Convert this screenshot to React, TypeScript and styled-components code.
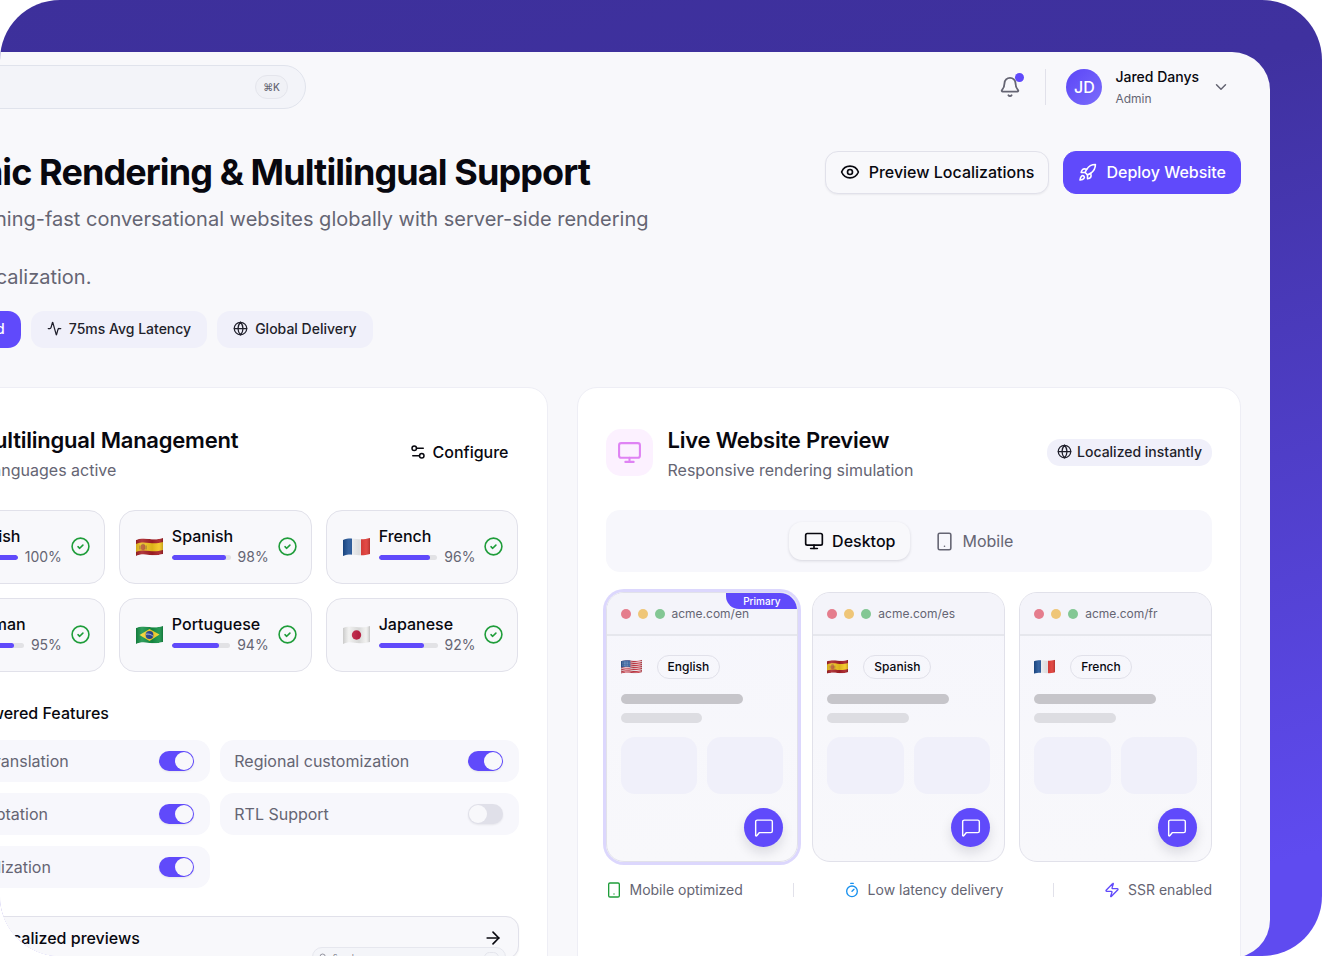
import React from "react";
import styled, { createGlobalStyle, css } from "styled-components";
import {
  Activity,
  ArrowRight,
  Bell,
  ChevronDown,
  Eye,
  Globe,
  Languages,
  Monitor,
  Rocket,
  Search,
  Server,
  Settings2,
  Sparkles,
  Timer,
  Zap,
} from "lucide-react";

const color = {
  ink: "#08080f",
  body: "#1f1f2b",
  muted: "#656573",
  accent: "#604afb",
  page: "#f8f8fb",
  soft: "#f0f0fa",
  line: "#e1e1ea",
};

const GlobalStyle = createGlobalStyle`
  *, *::before, *::after { box-sizing: border-box; }
  body { margin: 0; background: #fff; font-family: Inter, "Liberation Sans", sans-serif; color: ${color.ink}; }
  h1, h2, h3, p, ul { margin: 0; padding: 0; }
  ul { list-style: none; }
  button, input { font: inherit; color: inherit; }
  button { cursor: pointer; }
  svg { flex: none; display: block; }
`;

const Frame = styled.div`
  position: relative;
  display: flex;
  height: 100vh;
  padding: 52px 52px 0 0;
  overflow: hidden;
  border-radius: 60px;
  background: linear-gradient(165deg, #3d309b 0%, #3f319f 30%, #5f4bf0 92%);
`;

const AppPanel = styled.div`
  flex: 1;
  min-width: 0;
  margin: 0 0 -2px -146px;
  overflow: hidden;
  border-radius: 0 38px 38px 0;
  background: ${color.page};
`;

const TopBar = styled.header`
  display: flex;
  align-items: center;
  justify-content: space-between;
  height: 70px;
  padding: 0 40px 0 29px;
`;

const SearchBox = styled.label`
  display: flex;
  align-items: center;
  gap: 10px;
  width: 423px;
  height: 44px;
  padding: 0 17px;
  border: 1px solid #e0e3ec;
  border-radius: 22px;
  background: #f3f4f9;
  color: ${color.muted};

  input {
    flex: 1;
    min-width: 0;
    border: 0;
    outline: 0;
    background: none;
    font-size: 14px;
  }
`;

const Kbd = styled.kbd`
  padding: 0 7px;
  border: 1px solid #e4e5ec;
  border-radius: 12px;
  background: #f0f1f6;
  color: ${color.muted};
  font: 500 10px/22px Inter, "DejaVu Sans", sans-serif;
`;

const UserArea = styled.div`
  display: flex;
  align-items: center;
`;

const BellButton = styled.button`
  position: relative;
  display: flex;
  padding: 0;
  border: 0;
  background: none;
  color: ${color.muted};

  &::after {
    content: "";
    position: absolute;
    top: -3px;
    right: -3px;
    width: 9px;
    height: 9px;
    border-radius: 50%;
    background: ${color.accent};
  }
`;

const UserMenu = styled.button`
  display: flex;
  align-items: center;
  gap: 13px;
  height: 36px;
  margin-left: 24px;
  padding: 0 0 0 20px;
  border: 0;
  border-left: 1px solid ${color.line};
  background: none;
  text-align: left;

  > svg {
    color: ${color.muted};
  }
`;

const Avatar = styled.span`
  display: grid;
  place-items: center;
  width: 36px;
  height: 36px;
  border-radius: 50%;
  background: linear-gradient(135deg, #5b46f7, #7b6cfb);
  color: #fff;
  font-size: 16px;
  font-weight: 500;
`;

const UserText = styled.span`
  padding-top: 2px;
`;

const UserName = styled.span`
  display: block;
  font-size: 14px;
  font-weight: 500;
  line-height: 22px;
`;

const UserRole = styled.span`
  display: block;
  color: ${color.muted};
  font-size: 12px;
  line-height: 22px;
`;

const Main = styled.main`
  padding: 29px;
`;

const Hero = styled.section`
  display: flex;
  align-items: flex-start;
  justify-content: space-between;
`;

const Title = styled.h1`
  font-size: 36px;
  font-weight: 700;
  line-height: 43px;
  letter-spacing: -0.025em;
  white-space: nowrap;
`;

const Lead = styled.div`
  display: grid;
  gap: 29px;
  margin-top: 11px;
  color: ${color.muted};
  font-size: 20px;
  line-height: 29px;
  white-space: nowrap;
`;

const HeroActions = styled.div`
  display: flex;
  gap: 14px;
`;

const ActionButton = styled.button<{ $primary?: boolean }>`
  display: flex;
  align-items: center;
  gap: 9px;
  height: 43px;
  padding: 0 14px 1px;
  border: 1px solid ${(p) => (p.$primary ? color.accent : color.line)};
  border-radius: 13px;
  background: ${(p) => (p.$primary ? color.accent : color.page)};
  color: ${(p) => (p.$primary ? "#fff" : color.ink)};
  box-shadow: ${(p) => (p.$primary ? "none" : "0 1px 2px rgba(20, 20, 40, 0.06)")};
  font-size: 16px;
  font-weight: 500;
  white-space: nowrap;
`;

const Pills = styled.ul`
  display: flex;
  gap: 10px;
  margin: 19px 0 39px;
`;

const Pill = styled.li<{ $solid?: boolean; $small?: boolean }>`
  display: flex;
  align-items: center;
  gap: ${(p) => (p.$small ? 5 : 7)}px;
  height: ${(p) => (p.$small ? 27 : 37)}px;
  padding: 0 ${(p) => (p.$small ? 10 : 16)}px 2px;
  border-radius: 13px;
  background: ${(p) => (p.$solid ? color.accent : color.soft)};
  color: ${(p) => (p.$solid ? "#fff" : color.body)};
  font-size: 14px;
  font-weight: 500;
  white-space: nowrap;
`;

const Columns = styled.div`
  display: grid;
  grid-template-columns: repeat(2, minmax(0, 1fr));
  gap: 29px;
`;

const Card = styled.section`
  min-height: 640px;
  padding: 41px 28px 28px;
  border: 1px solid #eeeef5;
  border-radius: 20px;
  background: #fff;
`;

const CardHeader = styled.header`
  display: flex;
  align-items: center;
  gap: 15px;
  margin-bottom: 34px;
`;

const IconTile = styled.div<{ $bg: string; $fg: string }>`
  display: grid;
  place-items: center;
  width: 47px;
  height: 47px;
  border-radius: 15px;
  background: ${(p) => p.$bg};
  color: ${(p) => p.$fg};
`;

const Heading = styled.div`
  flex: 1;
  height: 47px;
  padding-top: 4px;
  display: flex;
  flex-direction: column;
  justify-content: center;
  white-space: nowrap;
`;

const CardTitle = styled.h2`
  font-size: 22px;
  font-weight: 600;
  line-height: 31px;
  letter-spacing: -0.01em;
`;

const CardSub = styled.p`
  color: ${color.muted};
  font-size: 16px;
  line-height: 29px;
`;

const GhostButton = styled.button`
  display: flex;
  align-items: center;
  gap: 6px;
  padding: 0 10px 2px;
  border: 0;
  background: none;
  font-size: 16px;
  font-weight: 500;
`;

const LanguageGrid = styled.ul`
  display: grid;
  grid-template-columns: repeat(3, minmax(0, 1fr));
  gap: 14px;
`;

const LanguageCard = styled.li`
  display: flex;
  align-items: center;
  gap: 9px;
  height: 74px;
  padding: 0 14px 1px 16px;
  border: 1px solid ${color.line};
  border-radius: 16px;
  background: ${color.page};
`;

const LanguageInfo = styled.div`
  flex: 1;
  min-width: 0;
`;

const LanguageName = styled.div`
  font-size: 16px;
  font-weight: 500;
  line-height: 21px;
`;

const ProgressRow = styled.div`
  display: flex;
  align-items: center;
  gap: 7px;
  color: ${color.muted};
  font-size: 14px;
  line-height: 20px;
`;

const Track = styled.div`
  flex: 1;
  height: 5px;
  overflow: hidden;
  border-radius: 3px;
  background: #e2e2e5;
`;

const Fill = styled.div`
  height: 100%;
  border-radius: 3px;
  background: ${color.accent};
`;

const SectionTitle = styled.h3`
  display: flex;
  align-items: center;
  gap: 16px;
  margin: 28px 0 14px;
  font-size: 16px;
  font-weight: 500;
  line-height: 26px;
`;

const FeatureGrid = styled.div`
  display: grid;
  grid-template-columns: repeat(2, minmax(0, 1fr));
  gap: 11px 10px;
`;

const Feature = styled.label`
  display: flex;
  align-items: center;
  justify-content: space-between;
  height: 42px;
  padding: 0 16px 0 14px;
  border-radius: 14px;
  background: #f7f7fc;
  color: ${color.muted};
  font-size: 16px;
  white-space: nowrap;
`;

const Switch = styled.input`
  appearance: none;
  display: flex;
  width: 35px;
  height: 20px;
  margin: 0;
  padding: 1px;
  border-radius: 10px;
  background: #e0e0e9;
  box-shadow: 0 1px 2px rgba(20, 20, 40, 0.08);
  cursor: pointer;

  &::before {
    content: "";
    width: 18px;
    height: 18px;
    border-radius: 50%;
    background: ${color.page};
  }

  &:checked {
    justify-content: flex-end;
    background: ${color.accent};
  }
`;

const WideButton = styled.button`
  display: flex;
  align-items: center;
  justify-content: space-between;
  width: 100%;
  height: 43px;
  margin-top: 28px;
  padding: 0 15px;
  border: 1px solid ${color.line};
  border-radius: 13px;
  background: ${color.page};
  box-shadow: 0 1px 2px rgba(20, 20, 40, 0.06);
  font-size: 16px;
  font-weight: 500;
`;

const MiniSearch = styled.div`
  position: absolute;
  top: 947px;
  left: 312px;
  display: flex;
  align-items: center;
  gap: 6px;
  width: 194px;
  height: 20px;
  padding: 0 6px;
  border: 1px solid #e6e7ee;
  border-radius: 10px;
  background: #f4f5f9;
  color: ${color.muted};
  font-size: 7px;

  i {
    width: 15px;
    height: 11px;
    margin-left: auto;
    border: 1px solid #e4e5ec;
    border-radius: 6px;
  }
`;

const Tabs = styled.div`
  display: flex;
  align-items: center;
  justify-content: center;
  gap: 10px;
  height: 62px;
  margin-bottom: 20px;
  border-radius: 14px;
  background: #f7f7fc;
`;

const Tab = styled.button<{ $active?: boolean }>`
  display: flex;
  align-items: center;
  gap: 8px;
  height: 38px;
  padding: 0 15px;
  border: 0;
  border-radius: 13px;
  background: none;
  color: ${color.muted};
  font-size: 16px;
  ${(p) =>
    p.$active &&
    css`
      background: ${color.page};
      box-shadow: 0 1px 3px rgba(20, 20, 40, 0.14);
      color: ${color.ink};
      font-weight: 500;
    `}
`;

const PreviewGrid = styled.div`
  display: grid;
  grid-template-columns: repeat(3, minmax(0, 1fr));
  gap: 14px;
`;

const Preview = styled.article<{ $primary?: boolean }>`
  position: relative;
  height: 270px;
  border: 1px solid ${color.line};
  border-radius: 18px;
  background: linear-gradient(#f6f6fc, #f8f8fb);
  box-shadow: ${(p) => (p.$primary ? "0 0 0 3px #dcd7fd" : "none")};
  overflow: hidden;
`;

const PrimaryTag = styled.span`
  position: absolute;
  top: 0;
  right: 0;
  width: 71px;
  border-radius: 0 0 0 13px;
  background: ${color.accent};
  color: #fff;
  font-size: 10px;
  font-weight: 500;
  line-height: 16px;
  text-align: center;
`;

const BrowserBar = styled.div`
  display: flex;
  align-items: center;
  gap: 7px;
  height: 43px;
  padding: 0 14px;
  border-bottom: 2px solid #e6e7ed;
  background: #f4f4fa;
  color: ${color.muted};
  font-size: 12px;
`;

const Dot = styled.i<{ $c: string }>`
  width: 10px;
  height: 10px;
  border-radius: 50%;
  background: ${(p) => p.$c};
`;

const PreviewBody = styled.div`
  display: flex;
  flex-direction: column;
  gap: 9px;
  padding: 19px 14px 0;
`;

const LocaleRow = styled.div`
  display: flex;
  align-items: center;
  gap: 15px;
  margin-bottom: 6px;
`;

const LocaleTag = styled.span`
  padding: 0 10px;
  border: 1px solid ${color.line};
  border-radius: 12px;
  font-size: 12px;
  font-weight: 500;
  line-height: 22px;
`;

const Line = styled.div<{ $short?: boolean }>`
  width: ${(p) => (p.$short ? "50%" : "75%")};
  height: 10px;
  border-radius: 5px;
  background: ${(p) => (p.$short ? "#dddde2" : "#c6c5ca")};
`;

const Blocks = styled.div`
  display: grid;
  grid-template-columns: 1fr 1fr;
  gap: 10px;
  margin: 5px 0;

  > div {
    height: 57px;
    border-radius: 14px;
    background: ${color.soft};
  }
`;

const ChatButton = styled.button`
  display: grid;
  place-items: center;
  align-self: flex-end;
  width: 39px;
  height: 39px;
  padding: 0;
  border: 0;
  border-radius: 50%;
  background: ${color.accent};
  box-shadow: 0 6px 12px rgba(20, 20, 40, 0.12);
  color: #fff;
`;

const Stats = styled.ul`
  display: flex;
  align-items: center;
  justify-content: space-between;
  margin-top: 18px;
  color: ${color.muted};
  font-size: 14px;
  line-height: 20px;
`;

const Stat = styled.li<{ $c: string }>`
  display: flex;
  align-items: center;
  gap: 8px;

  svg {
    color: ${(p) => p.$c};
  }
`;

const StatDivider = styled.li`
  width: 1px;
  height: 14px;
  background: ${color.line};
`;

type Code = "us" | "es" | "fr" | "de" | "br" | "jp";

/* A horizontal band of cloth between two heights, following the flag's wave. */
const band = (a: number, b: number) =>
  `M0 ${a + 1}C5 ${a - 1} 9 ${a - 0.5} 13.5 ${a}C18 ${a + 0.5} 22 ${a + 0.5} 27 ${a - 1}V${b - 1}C22 ${b + 0.5} 18 ${b + 0.5} 13.5 ${b}C9 ${b - 0.5} 5 ${b - 1} 0 ${b + 1}Z`;

function Flag({ code, width = 27 }: { code: Code; width?: number }) {
  const id = React.useId();
  const art: Record<Code, React.ReactNode> = {
    es: (
      <>
        <path d={band(2, 18)} fill="#a81f25" />
        <path d={band(6, 14)} fill="#f4c51d" />
        <path d="M5 8h4v3.500a2 2 0 0 1-4 0Z" fill="#b9582c" />
        <path d="M4 8.500v4M10 8.500v4M5.500 7.300h3" stroke="#8f5a34" strokeWidth="0.9" />
      </>
    ),
    fr: (
      <>
        <path d="M0 0h9v20H0Z" fill="#1c4f94" />
        <path d="M9 0h9v20H9Z" fill="#f4f5f7" />
        <path d="M18 0h9v20h-9Z" fill="#e03a35" />
      </>
    ),
    de: (
      <>
        <path d={band(2, 18)} fill="#1c1c1c" />
        <path d={band(7, 18)} fill="#d32b2b" />
        <path d={band(13, 18)} fill="#f2c21c" />
      </>
    ),
    br: (
      <>
        <path d={band(2, 18)} fill="#159146" />
        <path d="M3.500 10 13.500 4l10 5.500L13.500 16Z" fill="#f7d32c" />
        <circle cx="13.500" cy="10" r="3.900" fill="#2b4694" />
        <path d="M10 9.200c2.500-.5 5 .2 7 2" stroke="#dfe7ef" strokeWidth="0.8" fill="none" />
      </>
    ),
    jp: (
      <>
        <path d={band(2, 18)} fill="#f0f0ef" />
        <circle cx="13.500" cy="10" r="4.700" fill="#c62246" />
      </>
    ),
    us: (
      <>
        <path d={band(2, 18)} fill="#f1eff1" />
        {[2, 4.6, 7.2, 9.8, 12.4, 15].map((y) => (
          <path key={y} d={band(y, y + 1.4)} fill="#c93a48" />
        ))}
        <path d={band(16.8, 18)} fill="#c93a48" />
        <path d="M0 1.500C4 1 8 1 12 1.700V10.500C8 9.800 4 9.800 0 11Z" fill="#2f5d9e" />
        <path d="M2 4h9M2 6h9M2 8h9" stroke="#c9d6ea" strokeWidth="0.8" strokeDasharray="0.8 1.2" />
      </>
    ),
  };
  return (
    <svg width={width} viewBox="0 0 27 20" aria-label={code} role="img">
      <defs>
        <clipPath id={`${id}c`}>
          <path d={band(2, 18)} />
        </clipPath>
        <linearGradient id={`${id}s`}>
          <stop offset="0" stopColor="#000" stopOpacity="0.16" />
          <stop offset="0.22" stopColor="#fff" stopOpacity="0.12" />
          <stop offset="0.6" stopColor="#000" stopOpacity="0.1" />
          <stop offset="0.85" stopColor="#fff" stopOpacity="0.08" />
          <stop offset="1" stopColor="#000" stopOpacity="0.2" />
        </linearGradient>
      </defs>
      <g clipPath={`url(#${id}c)`}>
        {art[code]}
        <path d="M0 0h27v20H0Z" fill={`url(#${id}s)`} />
      </g>
    </svg>
  );
}

const CheckCircle = () => (
  <svg width="19" height="19" viewBox="0 0 19 19" fill="none" stroke="#1f9d3a" strokeWidth="1.600" strokeLinecap="round" strokeLinejoin="round">
    <circle cx="9.500" cy="9.500" r="8.400" />
    <path d="m7 9.700 1.700 1.600 3.200-3.200" />
  </svg>
);

const Phone = ({ size }: { size: number }) => (
  <svg width={size} height={size} viewBox="0 0 24 24" fill="none" stroke="currentColor" strokeWidth="2" strokeLinecap="round" strokeLinejoin="round">
    <rect x="4" y="1.500" width="16" height="21" rx="2" />
    <path d="M12 18h.01" />
  </svg>
);

const ChatIcon = () => (
  <svg width="20" height="20" viewBox="0 0 24 24" fill="none" stroke="currentColor" strokeWidth="1.700" strokeLinecap="round" strokeLinejoin="round">
    <path d="M22 4.500v11a2 2 0 0 1-2 2H6.500l-3.200 3.700a.7.700 0 0 1-1.300-.5V4.500a2 2 0 0 1 2-2h16a2 2 0 0 1 2 2Z" />
  </svg>
);

const languages: { code: Code; name: string; done: number; bar: number }[] = [
  { code: "us", name: "English", done: 100, bar: 100 },
  { code: "es", name: "Spanish", done: 98, bar: 92 },
  { code: "fr", name: "French", done: 96, bar: 87 },
  { code: "de", name: "German", done: 95, bar: 84 },
  { code: "br", name: "Portuguese", done: 94, bar: 81 },
  { code: "jp", name: "Japanese", done: 92, bar: 77 },
];

const features = [
  { name: "Context translation", on: true },
  { name: "Regional customization", on: true },
  { name: "Tone adaptation", on: true },
  { name: "RTL Support", on: false },
  { name: "Date localization", on: true },
];

const previews: { code: Code; name: string; path: string }[] = [
  { code: "us", name: "English", path: "en" },
  { code: "es", name: "Spanish", path: "es" },
  { code: "fr", name: "French", path: "fr" },
];

export default function App() {
  return (
    <>
      <GlobalStyle />
      <Frame>
        <AppPanel>
          <TopBar>
            <SearchBox>
              <Search size={16} />
              <input type="search" placeholder="Search" aria-label="Search" />
              <Kbd>⌘K</Kbd>
            </SearchBox>
            <UserArea>
              <BellButton aria-label="Notifications">
                <Bell size={22} strokeWidth={2} />
              </BellButton>
              <UserMenu>
                <Avatar>JD</Avatar>
                <UserText>
                  <UserName>Jared Danys</UserName>
                  <UserRole>Admin</UserRole>
                </UserText>
                <ChevronDown size={18} />
              </UserMenu>
            </UserArea>
          </TopBar>

          <Main>
            <Hero>
              <div>
                <Title>Dynamic Rendering &amp; Multilingual Support</Title>
                <Lead>
                  <p>Deploy lightning-fast conversational websites globally with server-side rendering</p>
                  <p>with auto-localization.</p>
                </Lead>
              </div>
              <HeroActions>
                <ActionButton>
                  <Eye size={20} />
                  Preview Localizations
                </ActionButton>
                <ActionButton $primary>
                  <Rocket size={19} strokeWidth={2} />
                  Deploy Website
                </ActionButton>
              </HeroActions>
            </Hero>

            <Pills>
              <Pill $solid>
                <Server size={14} />
                SSR Enabled
              </Pill>
              <Pill>
                <Activity size={15} />
                75ms Avg Latency
              </Pill>
              <Pill>
                <Globe size={15} />
                Global Delivery
              </Pill>
            </Pills>

            <Columns>
              <Card>
                <CardHeader>
                  <IconTile $bg="#efedff" $fg={color.accent}>
                    <Languages size={24} />
                  </IconTile>
                  <Heading>
                    <CardTitle>Multilingual Management</CardTitle>
                    <CardSub>6 languages active</CardSub>
                  </Heading>
                  <GhostButton>
                    <Settings2 size={18} />
                    Configure
                  </GhostButton>
                </CardHeader>

                <LanguageGrid>
                  {languages.map((l) => (
                    <LanguageCard key={l.code}>
                      <Flag code={l.code} />
                      <LanguageInfo>
                        <LanguageName>{l.name}</LanguageName>
                        <ProgressRow>
                          <Track>
                            <Fill style={{ width: `${l.bar}%` }} />
                          </Track>
                          {l.done}%
                        </ProgressRow>
                      </LanguageInfo>
                      <CheckCircle />
                    </LanguageCard>
                  ))}
                </LanguageGrid>

                <SectionTitle>
                  <Sparkles size={20} />
                  AI-Powered Features
                </SectionTitle>
                <FeatureGrid>
                  {features.map((f) => (
                    <Feature key={f.name}>
                      {f.name}
                      <Switch type="checkbox" role="switch" defaultChecked={f.on} />
                    </Feature>
                  ))}
                </FeatureGrid>

                <WideButton>
                  Simulate localized previews
                  <ArrowRight size={20} />
                </WideButton>
              </Card>

              <Card>
                <CardHeader>
                  <IconTile $bg="#fcf1ff" $fg="#df83f4">
                    <Monitor size={25} strokeWidth={2} />
                  </IconTile>
                  <Heading>
                    <CardTitle>Live Website Preview</CardTitle>
                    <CardSub>Responsive rendering simulation</CardSub>
                  </Heading>
                  <Pill as="span" $small>
                    <Globe size={15} />
                    Localized instantly
                  </Pill>
                </CardHeader>

                <Tabs role="tablist">
                  <Tab role="tab" aria-selected $active>
                    <Monitor size={20} />
                    Desktop
                  </Tab>
                  <Tab role="tab" aria-selected={false}>
                    <Phone size={19} />
                    Mobile
                  </Tab>
                </Tabs>

                <PreviewGrid>
                  {previews.map((p, i) => (
                    <Preview key={p.code} $primary={i === 0}>
                      <BrowserBar>
                        <Dot $c="#e57d8d" />
                        <Dot $c="#efc678" />
                        <Dot $c="#83c794" />
                        acme.com/{p.path}
                      </BrowserBar>
                      {i === 0 && <PrimaryTag>Primary</PrimaryTag>}
                      <PreviewBody>
                        <LocaleRow>
                          <Flag code={p.code} width={21} />
                          <LocaleTag>{p.name}</LocaleTag>
                        </LocaleRow>
                        <Line />
                        <Line $short />
                        <Blocks>
                          <div />
                          <div />
                        </Blocks>
                        <ChatButton aria-label={`Chat in ${p.name}`}>
                          <ChatIcon />
                        </ChatButton>
                      </PreviewBody>
                    </Preview>
                  ))}
                </PreviewGrid>

                <Stats>
                  <Stat $c="#1f9d3a">
                    <Phone size={16} />
                    Mobile optimized
                  </Stat>
                  <StatDivider />
                  <Stat $c="#1790ee">
                    <Timer size={16} />
                    Low latency delivery
                  </Stat>
                  <StatDivider />
                  <Stat $c={color.accent}>
                    <Zap size={16} />
                    SSR enabled
                  </Stat>
                </Stats>
              </Card>
            </Columns>
          </Main>
        </AppPanel>
        <MiniSearch>
          <Search size={8} />
          Search
          <i />
        </MiniSearch>
      </Frame>
    </>
  );
}
